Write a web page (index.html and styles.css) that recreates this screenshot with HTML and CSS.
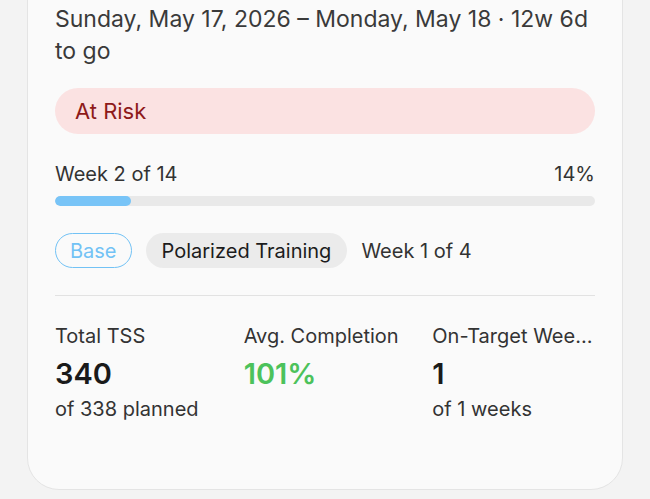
FILE: index.html
```html
<!DOCTYPE html>
<html lang="en">
<head>
    <meta charset="UTF-8">
    <meta name="viewport" content="width=device-width, initial-scale=1.0">
    <title>Training Plan</title>
    <link rel="stylesheet" href="styles.css">
</head>
<body>
    <div class="plan-card">
        <p class="plan-dates">Sunday, May 17, 2026 – Monday, May 18 · 12w 6d to go</p>

        <div class="status-pill">At Risk</div>

        <div class="progress-head">
            <span>Week 2 of 14</span>
            <span>14%</span>
        </div>
        <div class="progress-track">
            <div class="progress-fill" style="width: 14%"></div>
        </div>

        <div class="phase-row">
            <span class="chip chip-phase">Base</span>
            <span class="chip chip-block">Polarized Training</span>
            <span class="phase-week">Week 1 of 4</span>
        </div>

        <div class="stats">
            <div class="stat">
                <div class="stat-label">Total TSS</div>
                <div class="stat-value">340</div>
                <div class="stat-sub">of 338 planned</div>
            </div>
            <div class="stat">
                <div class="stat-label">Avg. Completion</div>
                <div class="stat-value good">101%</div>
            </div>
            <div class="stat">
                <div class="stat-label">On-Target Weeks</div>
                <div class="stat-value">1</div>
                <div class="stat-sub">of 1 weeks</div>
            </div>
        </div>
    </div>
</body>
</html>
```

FILE: styles.css
```css
/* Plan summary card */
body {
    margin: 0;
    background: #f3f3f3;
    font-family: Inter, "Noto Sans", sans-serif;
    color: #333;
    overflow: hidden;
}

.plan-card {
    margin: -40px 27px 0;
    padding: 42px 27px 68px;
    background: #fafafa;
    border: 1px solid #e4e4e4;
    border-radius: 32px;
}

.plan-dates {
    margin: 0;
    font-size: 23px;
    line-height: 32px;
    color: #3a3a3a;
}

.status-pill {
    margin-top: 21px;
    height: 46px;
    padding: 0 20px;
    display: flex;
    align-items: center;
    border-radius: 23px;
    background: #fbe2e2;
    color: #8e1a1a;
    font-size: 22px;
}

/* Overall progress */
.progress-head {
    margin-top: 28px;
    display: flex;
    justify-content: space-between;
    font-size: 20px;
    line-height: 24px;
}

.progress-track {
    margin-top: 10px;
    height: 10px;
    border-radius: 5px;
    background: #e9e9e9;
    overflow: hidden;
}

.progress-fill {
    height: 100%;
    border-radius: 5px;
    background: #78c4f7;
}

/* Current phase / block */
.phase-row {
    margin-top: 27px;
    padding-bottom: 27px;
    border-bottom: 1px solid #e2e2e2;
    display: flex;
    align-items: center;
    gap: 14px;
    font-size: 20px;
}

.chip {
    height: 35px;
    box-sizing: border-box;
    display: inline-flex;
    align-items: center;
    border-radius: 18px;
    padding: 0 14px;
}

.chip-phase {
    border: 1.5px solid #72c2f5;
    color: #72c2f5;
}

.chip-block {
    padding: 0 16px;
    background: #ebebeb;
    color: #1c1c1c;
}

/* Totals */
.stats {
    margin-top: 28px;
    display: grid;
    grid-template-columns: repeat(3, 1fr);
    column-gap: 26px;
}

.stat {
    min-width: 0;
}

.stat-label {
    font-size: 20px;
    line-height: 24px;
    white-space: nowrap;
    overflow: hidden;
    text-overflow: ellipsis;
}

.stat-value {
    margin-top: 8px;
    font-size: 29px;
    line-height: 36px;
    font-weight: 600;
    color: #1a1a1a;
}

.stat-value.good {
    color: #4cc25b;
}

.stat-sub {
    margin-top: 5px;
    font-size: 20px;
    line-height: 24px;
}
```
